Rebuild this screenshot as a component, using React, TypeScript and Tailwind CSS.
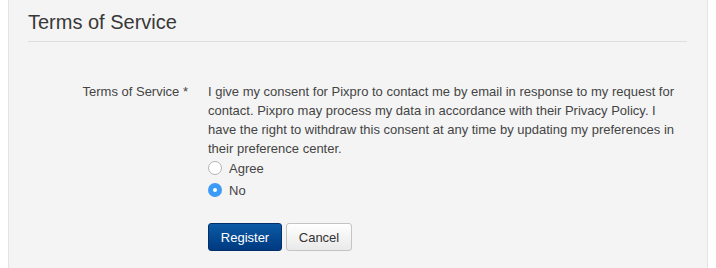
export default function App() {
  return (
    <div className="h-[268px] w-full bg-white px-2 font-['Liberation_Sans',Arial,sans-serif]">
      <div className="h-full border-x border-[#e4e4e4] bg-[#f4f4f4] pl-[19px] pr-5">
        <h2 className="border-b border-[#dedede] pt-[11px] pb-[8px] text-[20px] leading-[22px] text-[#383838]">
          Terms of Service
        </h2>
        <div className="mt-[40px] flex gap-5 text-[13px] leading-[19px] text-[#444]">
          <label className="w-[160px] shrink-0 text-right">Terms of Service *</label>
          <div className="w-[470px]">
            <p>
              I give my consent for Pixpro to contact me by email in response to my request for
              contact. Pixpro may process my data in accordance with their Privacy Policy. I have
              the right to withdraw this consent at any time by updating my preferences in their
              preference center.
            </p>
            <div className="mt-[-1px]">
              <div className="flex h-[22px] items-center gap-[7px]">
                <span className="h-[14px] w-[14px] rounded-full border border-[#b5b5b5] bg-white" />
                <span>Agree</span>
              </div>
              <div className="flex h-[22px] items-center gap-[7px]">
                <span className="flex h-[14px] w-[14px] items-center justify-center rounded-full bg-[#3d9af7]">
                  <span className="h-[4px] w-[4px] rounded-full bg-white" />
                </span>
                <span>No</span>
              </div>
            </div>
            <div className="mt-[22px] flex gap-[4px]">
              <button className="h-[28px] w-[74px] rounded-[3px] border border-[#022f6a] bg-gradient-to-b from-[#0d5aa6] to-[#003a80] text-[13px] text-white">
                Register
              </button>
              <button className="h-[28px] w-[66px] rounded-[3px] border border-[#c4c4c4] bg-gradient-to-b from-white to-[#e9e9e9] text-[13px] text-[#333]">
                Cancel
              </button>
            </div>
          </div>
        </div>
      </div>
    </div>
  )
}
